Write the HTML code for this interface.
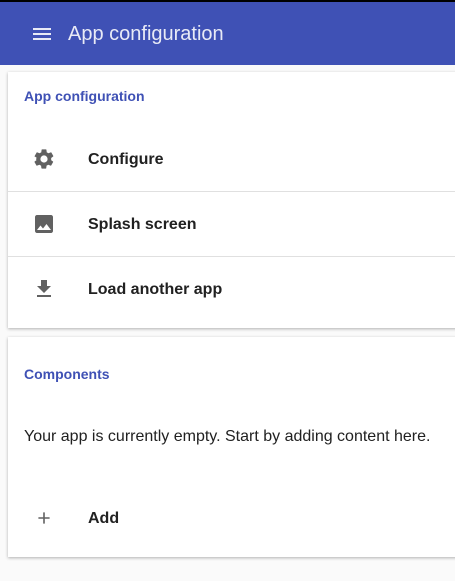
<!DOCTYPE html><html><head><style>
body{margin:0;width:455px;height:581px;background:#fafafa;font-family:"Liberation Sans",sans-serif;overflow:hidden;position:relative}
.top{position:absolute;left:0;top:0;width:455px;height:2px;background:#000}
.bar{position:absolute;left:0;top:2px;width:455px;height:63px;background:#3f51b5;color:#e8eaf6}
.bar .t{position:absolute;left:68px;top:21px;font-size:20px}
.card{position:absolute;left:8px;width:460px;background:#fff;box-shadow:0 1px 3px rgba(0,0,0,.3)}
.h{position:absolute;left:16px;font-size:14px;font-weight:bold;color:#3f51b5}
.row{position:absolute;left:0;width:460px;height:65px}
.row .l{position:absolute;left:80px;top:25px;font-size:16px;font-weight:bold;color:#212121}
.row svg{position:absolute;left:24px;top:21px}
.div{border-bottom:1px solid #e0e0e0}
</style></head><body>
<div class="top"></div>
<div class="bar">
<svg style="position:absolute;left:32px;top:24px" width="20" height="16"><rect x="1" y="2" width="18" height="2" fill="#e8eaf6"/><rect x="1" y="7" width="18" height="2" fill="#e8eaf6"/><rect x="1" y="12" width="18" height="2" fill="#e8eaf6"/></svg>
<div class="t">App configuration</div></div>
<div class="card" style="top:72px;height:256px">
<div class="h" style="top:16px">App configuration</div>
<div class="row div" style="top:54px">
<svg width="24" height="24" viewBox="0 0 24 24"><path fill="#616161" d="M19.14 12.94c.04-.3.06-.61.06-.94 0-.32-.02-.64-.07-.94l2.03-1.58a.49.49 0 0 0 .12-.61l-1.92-3.32a.49.49 0 0 0-.59-.22l-2.39.96c-.5-.38-1.030-.7-1.62-.94l-.36-2.540a.48.48 0 0 0-.48-.41h-3.84c-.24 0-.43.17-.47.41l-.36 2.54c-.59.24-1.13.57-1.62.94l-2.39-.96a.48.48 0 0 0-.59.22L2.74 8.87c-.12.21-.8.47.12.61l2.03 1.58c-.5.3-.9.63-.9.94s.2.64.7.94l-2.03 1.58a.49.49 0 0 0-.12.61l1.92 3.32c.12.22.37.29.59.22l2.39-.96c.5.38 1.03.7 1.62.94l.36 2.54c.5.24.24.41.48.41h3.84c.24 0 .44-.17.47-.41l.36-2.54c.59-.24 1.130-.56 1.62-.94l2.39.96c.22.08.47 0 .59-.22l1.92-3.32a.47.47 0 0 0-.12-.61l-2.01-1.58zM12 15.6A3.6 3.6 0 1 1 12 8.4a3.6 3.6 0 0 1 0 7.2z"/></svg>
<div class="l">Configure</div></div>
<div class="row div" style="top:119px">
<svg width="24" height="24" viewBox="0 0 24 24"><path fill="#616161" d="M21 19V5c0-1.1-.9-2-2-2H5c-1.1 0-2 .9-2 2v14c0 1.1.9 2 2 2h14c1.1 0 2-.9 2-2zM8.5 13.5l2.5 3.01L14.5 12l4.5 6H5l3.5-4.5z"/></svg>
<div class="l">Splash screen</div></div>
<div class="row" style="top:184px">
<svg width="24" height="24" viewBox="0 0 24 24"><path fill="#616161" d="M19 9h-4V3H9v6H5l7 7 7-7zM5 18v2h14v-2H5z"/></svg>
<div class="l">Load another app</div></div>
</div>
<div class="card" style="top:337px;height:220px">
<div class="h" style="top:29px">Components</div>
<div style="position:absolute;left:16px;top:91px;font-size:16px;color:#212121">Your app is currently empty. Start by adding content here.</div>
<div class="row" style="top:148px">
<svg width="24" height="24" viewBox="0 0 24 24"><path fill="#616161" d="M19 13h-6v6h-2v-6H5v-2h6V5h2v6h6v2z" transform="translate(2.4 2.4) scale(.8)"/></svg>
<div class="l">Add</div></div>
</div>
</body></html>
